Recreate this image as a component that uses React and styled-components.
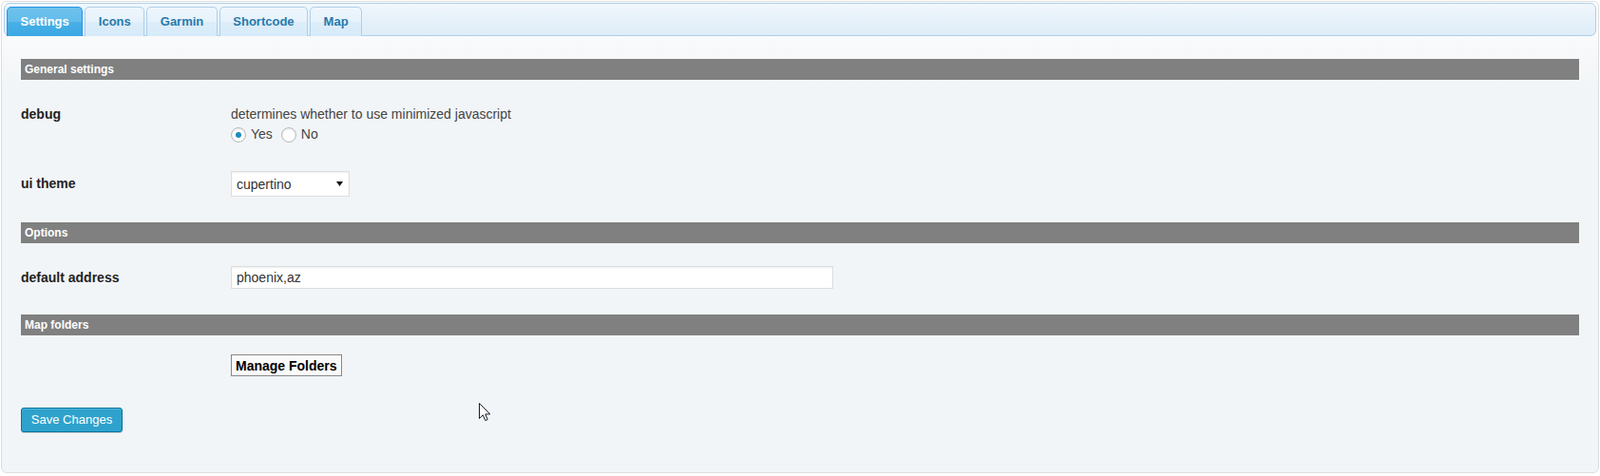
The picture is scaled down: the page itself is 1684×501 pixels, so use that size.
import React from "react";
import styled, { createGlobalStyle } from "styled-components";

const Global = createGlobalStyle`
  html, body { margin: 0; padding: 0; background: #fff; }
  body { font-family: "Liberation Sans", Arial, sans-serif; color: #444; }
  * { box-sizing: border-box; }
`;

const Page = styled.div`
  position: relative;
  padding: 1px 1px 0 1px;
`;

const Widget = styled.div`
  border: 1px solid #dddddd;
  border-radius: 6px;
  padding: 1px 2px 2px 2px;
  background: linear-gradient(to bottom, #fdfefe 0px, #f2f5f7 90px, #f2f5f7 100%);
`;

const TabBar = styled.ul`
  display: flex;
  gap: 2px;
  margin: 0;
  list-style: none;
  padding: 3px 2px 0 2px;
  border: 1px solid #aed0ea;
  border-radius: 6px;
  background: linear-gradient(to bottom, #f1f7fc 0%, #e6f1fa 50%, #deedf7 100%);
`;

const Tab = styled.li`
  height: 31px;
  margin-bottom: -1px;
  padding: 0 13.5px;
  border: 1px solid ${(p) => (p.$active ? "#2694e8" : "#aed0ea")};
  border-bottom: none;
  border-radius: 5px 5px 0 0;
  font-size: 13px;
  font-weight: bold;
  line-height: 29px;
  color: ${(p) => (p.$active ? "#ffffff" : "#2779aa")};
  background: ${(p) =>
    p.$active
      ? "linear-gradient(to bottom, #6ec2ed 0%, #62bbea 50%, #48afe6 52%, #3aa8e3 100%)"
      : "linear-gradient(to bottom, #eef6fd 0%, #e6f2fb 50%, #dcedf9 52%, #d7ebf9 100%)"};
  cursor: pointer;
`;

const Panel = styled.div`
  padding: 24px 18px 40px 18px;
`;

const SectionBar = styled.h3`
  margin: 0;
  height: 22px;
  padding-left: 4px;
  background: #808080;
  color: #fff;
  font-size: 12px;
  font-weight: bold;
  line-height: 22px;
`;

const Table = styled.div`
  margin-top: ${(p) => p.$top ?? 9}px;
  margin-bottom: ${(p) => p.$bottom ?? 12}px;
`;

const Row = styled.div`
  display: grid;
  grid-template-columns: 221px 1fr;
  align-items: ${(p) => (p.$center ? "center" : "start")};
  padding: ${(p) => p.$padTop ?? 15}px 0 ${(p) => p.$padBottom ?? 15}px;
`;

const Label = styled.div`
  font-size: 14px;
  font-weight: bold;
  color: #222;
  line-height: 21px;
`;

const Field = styled.div`
  font-size: 14px;
  line-height: 21px;
  color: #444;
`;

const RadioLine = styled.div`
  display: flex;
  align-items: center;
  height: 21px;
`;

const RadioLabel = styled.label`
  display: inline-flex;
  align-items: center;
  gap: 5px;
  margin-right: 9px;
  color: #444;
`;

const Radio = styled.input`
  appearance: none;
  width: 16px;
  height: 16px;
  margin: 0;
  border: 1px solid #b4b9be;
  border-radius: 50%;
  background: #fff;
  box-shadow: inset 0 1px 2px rgba(0, 0, 0, 0.1);
  &:checked::before {
    content: "";
    display: block;
    width: 6px;
    height: 6px;
    margin: 4px;
    border-radius: 50%;
    background: #1e8cbe;
  }
`;

const SelectWrap = styled.div`
  position: relative;
  width: 125px;
  height: 27px;
`;

const NativeSelect = styled.select`
  appearance: none;
  width: 100%;
  height: 100%;
  margin: 0;
  padding: 0 20px 0 5px;
  border: 1px solid #dddddd;
  border-radius: 0;
  background: #fff;
  box-shadow: inset 0 1px 2px rgba(0, 0, 0, 0.07);
  font-family: "Liberation Sans", Arial, sans-serif;
  font-size: 14px;
  color: #333;
  outline: none;
`;

const SelectArrow = styled.svg`
  position: absolute;
  right: 7px;
  top: 11px;
  pointer-events: none;
`;

const TextInput = styled.input`
  width: 634px;
  height: 24px;
  margin: 0;
  padding: 0 5px;
  border: 1px solid #dddddd;
  background: #fff;
  box-shadow: inset 0 1px 2px rgba(0, 0, 0, 0.07);
  font-family: "Liberation Sans", Arial, sans-serif;
  font-size: 14px;
  color: #333;
  outline: none;
`;

const PlainButton = styled.button`
  height: 23px;
  margin: 0;
  padding: 0 4px;
  border: 1px solid #888;
  border-radius: 0;
  background: #fafafa;
  font-family: "Liberation Sans", Arial, sans-serif;
  font-size: 14px;
  font-weight: bold;
  color: #000;
  white-space: nowrap;
  cursor: pointer;
`;

const Submit = styled.div`
  margin-top: 18px;
`;

const PrimaryButton = styled.button`
  min-width: 107px;
  height: 26px;
  margin: 0;
  padding: 0 9px 1px;
  border: 1px solid #0074a2;
  border-radius: 3px;
  background: #2ea2cc;
  box-shadow: inset 0 1px 0 rgba(120, 200, 230, 0.5), 0 1px 0 rgba(0, 0, 0, 0.15);
  font-family: "Liberation Sans", Arial, sans-serif;
  font-size: 13px;
  color: #fff;
  white-space: nowrap;
  cursor: pointer;
`;

const Cursor = styled.svg`
  position: absolute;
  left: 504px;
  top: 424px;
  pointer-events: none;
`;

const tabs = ["Settings", "Icons", "Garmin", "Shortcode", "Map"];

export default function App() {
  return (
    <Page>
      <Global />
      <Widget>
        <TabBar>
          {tabs.map((t, i) => (
            <Tab key={t} $active={i === 0}>
              {t}
            </Tab>
          ))}
        </TabBar>
        <Panel>
          <SectionBar>General settings</SectionBar>
          <Table>
            <Row $padTop={17} $padBottom={13}>
              <Label>debug</Label>
              <Field>
                <div>determines whether to use minimized javascript</div>
                <RadioLine>
                  <RadioLabel>
                    <Radio type="radio" name="debug" defaultChecked /> Yes
                  </RadioLabel>
                  <RadioLabel>
                    <Radio type="radio" name="debug" /> No
                  </RadioLabel>
                </RadioLine>
              </Field>
            </Row>
            <Row $center>
              <Label>ui theme</Label>
              <Field>
                <SelectWrap>
                  <NativeSelect defaultValue="cupertino">
                    <option value="cupertino">cupertino</option>
                    <option value="smoothness">smoothness</option>
                    <option value="redmond">redmond</option>
                  </NativeSelect>
                  <SelectArrow width="7" height="5" viewBox="0 0 7 5">
                    <path d="M0 0 L7 0 L3.5 5 Z" fill="#111" />
                  </SelectArrow>
                </SelectWrap>
              </Field>
            </Row>
          </Table>

          <SectionBar>Options</SectionBar>
          <Table>
            <Row $center>
              <Label>default address</Label>
              <Field>
                <TextInput type="text" defaultValue="phoenix,az" />
              </Field>
            </Row>
          </Table>

          <SectionBar>Map folders</SectionBar>
          <Table $top={5} $bottom={0}>
            <Row $center>
              <Label />
              <Field>
                <PlainButton type="button">Manage Folders</PlainButton>
              </Field>
            </Row>
          </Table>

          <Submit>
            <PrimaryButton type="button">Save Changes</PrimaryButton>
          </Submit>
        </Panel>
      </Widget>
      <Cursor width="13" height="20" viewBox="0 0 13 20">
        <path
          d="M0.5 0.5 L0.5 16.5 L4.3 12.8 L6.8 18.6 L9.2 17.6 L6.8 11.9 L11.8 11.9 Z"
          fill="#fff"
          stroke="#1a1a2a"
          strokeWidth="1"
          strokeLinejoin="miter"
        />
      </Cursor>
    </Page>
  );
}
